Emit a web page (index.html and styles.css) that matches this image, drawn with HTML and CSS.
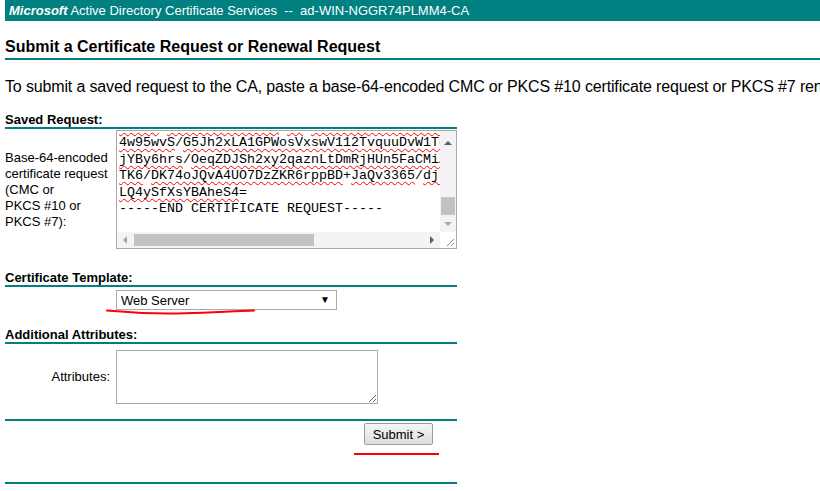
FILE: index.html
```html
<!DOCTYPE html>
<html lang="en">
<head>
    <meta charset="UTF-8">
    <meta name="viewport" content="width=device-width, initial-scale=1.0">
    <title>Microsoft Active Directory Certificate Services</title>
    <link rel="stylesheet" href="styles.css">
</head>
<body>

    <div class="banner"><span class="brand">Microsoft</span> Active Directory Certificate Services &nbsp;--&nbsp; ad-WIN-NGGR74PLMM4-CA</div>

    <h1 class="page-title">Submit a Certificate Request or Renewal Request</h1>

    <p class="intro">To submit a saved request to the CA, paste a base-64-encoded CMC or PKCS #10 certificate request or PKCS #7 renewal request generated by an external source (such as a Web server) in the Saved Request box.</p>

    <form class="req-form">
        <h2 class="section-title first">Saved Request:</h2>
        <div class="field-row saved-row">
            <label class="field-label">Base-64-encoded<br>certificate request<br>(CMC or<br>PKCS #10 or<br>PKCS #7):</label>
            <div class="req-box">
                <div class="req-view">
<pre class="req-text"><span class="sq">NKzrX</span>+<span class="sq">Yt8xHvB3sW9cLm</span>+<span class="sq">Ke</span>+<span class="sq">aZ5cR7uT1wE2oI6kBnHe</span>
<span class="sq">4w95wvS</span>/<span class="sq">G5Jh2xLA1GPWosVxswV112TvquuDvW1TqRbk</span>
<span class="sq">jYBy6hrs</span>/<span class="sq">OeqZDJSh2xy2qaznLtDmRjHUn5FaCMiZ0wd</span>
<span class="sq">TK6</span>/<span class="sq">DK74oJQvA4UO7DzZKR6rppBD</span>+<span class="sq">JaQv3365</span>/<span class="sq">djF9a</span>
<span class="sq">LQ4ySfXsYBAheS4</span>=
-----END CERTIFICATE REQUEST-----
</pre>
                </div>
                <div class="vbar">
                    <span class="arr-box tall"><span class="tri up"></span></span>
                    <span class="vtrack"><span class="vthumb"></span></span>
                    <span class="arr-box"><span class="tri down"></span></span>
                </div>
                <div class="hbar">
                    <span class="arr-box"><span class="tri left"></span></span>
                    <span class="htrack"><span class="hthumb"></span></span>
                    <span class="arr-box"><span class="tri right"></span></span>
                </div>
                <div class="corner">
                    <svg width="16" height="16" viewBox="0 0 16 16">
                        <path d="M14 7 L7 14 M14 11 L11 14" stroke="#8a8a8a" stroke-width="1"/>
                    </svg>
                </div>
            </div>
        </div>

        <h2 class="section-title template-title">Certificate Template:</h2>
        <div class="field-row template-row">
            <span class="field-label"></span>
            <span class="select-wrap">
                <select class="tpl-select">
                    <option>Web Server</option>
                </select>
            </span>
        </div>

        <h2 class="section-title attr-title">Additional Attributes:</h2>
        <div class="field-row attr-row">
            <label class="field-label right">Attributes:</label>
            <textarea class="attr-box"></textarea>
        </div>

        <div class="submit-row">
            <button type="button" class="submit-btn">Submit &gt;</button>
        </div>
        <div class="end-rule"></div>
    </form>

    <!-- red marks drawn over the screenshot -->
    <svg class="marks" width="820" height="491" viewBox="0 0 820 491">
        <path d="M107 310.5 C128 312.5 155 314 185 313.2 S235 311 254 310.6" fill="none" stroke="#ff0000" stroke-width="2" stroke-linecap="round"/>
        <path d="M354 454 L439 454" stroke="#ff0000" stroke-width="2"/>
    </svg>
</body>
</html>
```

FILE: styles.css
```css
html, body {
    overflow: hidden;
}

body {
    margin: 0 0 0 5px;
    font-family: "Liberation Sans", Arial, sans-serif;
    color: #000000;
    background: #ffffff;
}

.banner {
    height: 21px;
    line-height: 21px;
    padding-left: 4px;
    background-color: #008080;
    color: #ffffff;
    font-size: 13px;
    white-space: nowrap;
}

.brand {
    font-weight: bold;
    font-style: italic;
}

.page-title {
    margin: 17px 0 0;
    padding-bottom: 2px;
    font-size: 16px;
    line-height: 18px;
    border-bottom: 2px solid #008080;
}

.intro {
    margin: 18px 0 0;
    font-size: 16px;
    line-height: 18px;
    letter-spacing: -0.15px;
    white-space: nowrap;
}

.req-form {
    width: 452px;
}

.section-title {
    margin: 0;
    font-size: 13px;
    line-height: 14px;
    border-bottom: 2px solid #008080;
}

.section-title.first {
    margin-top: 17px;
}

.template-title {
    margin-top: 22px;
}

.attr-title {
    margin-top: 18px;
}

.field-row {
    display: flex;
    align-items: center;
    gap: 6px;
}

.field-label {
    width: 105px;
    flex: none;
    font-size: 13px;
    line-height: 16px;
}

.field-label.right {
    text-align: right;
}

.saved-row {
    margin-top: 1px;
}

.template-row {
    margin-top: 3px;
}

.attr-row {
    margin-top: 6px;
}

/* saved request box with its scroll bars */
.req-box {
    box-sizing: border-box;
    width: 342px;
    height: 119px;
    border: 1px solid #a9a9a9;
    display: grid;
    grid-template-columns: 1fr 16px;
    grid-template-rows: 1fr 16px;
    background: #ffffff;
}

.req-view {
    overflow: hidden;
}

.req-text {
    margin: -12px 0 0;
    padding-left: 2px;
    font-family: "Liberation Mono", "Courier New", monospace;
    font-size: 13.33px;
    line-height: 16.4px;
    white-space: pre;
}

.sq {
    text-decoration: underline wavy #ff0000;
    text-decoration-thickness: 1px;
    text-underline-offset: 2px;
    text-decoration-skip-ink: none;
}

.vbar {
    display: flex;
    flex-direction: column;
    background: #f4f2f5;
}

.hbar {
    display: flex;
    background: #f4f2f5;
}

.arr-box {
    width: 16px;
    height: 16px;
    flex: none;
    display: flex;
    align-items: center;
    justify-content: center;
}

.arr-box.tall {
    height: 24px;
}

.tri {
    width: 0;
    height: 0;
}

.tri.up {
    border-left: 4px solid transparent;
    border-right: 4px solid transparent;
    border-bottom: 4px solid #606060;
}

.tri.down {
    border-left: 4px solid transparent;
    border-right: 4px solid transparent;
    border-top: 4px solid #a8a8a8;
}

.tri.left {
    border-top: 4px solid transparent;
    border-bottom: 4px solid transparent;
    border-right: 4px solid #a8a8a8;
}

.tri.right {
    border-top: 4px solid transparent;
    border-bottom: 4px solid transparent;
    border-left: 4px solid #606060;
}

.vtrack {
    flex: 1;
}

.vthumb {
    display: block;
    margin: 42px 1px 0;
    height: 18px;
    background: #c2c2c2;
}

.htrack {
    flex: 1;
}

.hthumb {
    display: block;
    margin: 2px 0 0 1px;
    width: 180px;
    height: 12px;
    background: #c2c2c2;
}

.corner {
    background: #ffffff;
}

.corner svg {
    display: block;
}

/* template dropdown */
.select-wrap {
    position: relative;
    display: inline-block;
}

.select-wrap::after {
    content: "\25BC";
    position: absolute;
    right: 7px;
    top: 5px;
    font-size: 10px;
    line-height: 10px;
    color: #000000;
    pointer-events: none;
}

.tpl-select {
    appearance: none;
    -webkit-appearance: none;
    box-sizing: border-box;
    width: 221px;
    height: 20px;
    margin: 0;
    padding: 0 4px;
    border: 1px solid #a9a9a9;
    border-radius: 0;
    background: #ffffff;
    color: #000000;
    font-family: "Liberation Sans", Arial, sans-serif;
    font-size: 13px;
}

.attr-box {
    box-sizing: border-box;
    width: 262px;
    height: 54px;
    margin: 0;
    padding: 2px;
    border: 1px solid #a9a9a9;
    border-radius: 0;
    font-family: "Liberation Mono", monospace;
    font-size: 13px;
}

.submit-row {
    margin-top: 15px;
    padding: 2px 24px 0 0;
    border-top: 2px solid #008080;
    display: flex;
    justify-content: flex-end;
}

.submit-btn {
    box-sizing: border-box;
    width: 69px;
    height: 22px;
    padding: 0;
    border: 1px solid #9c9c9c;
    border-radius: 2px;
    background: linear-gradient(#f6f6f6, #dddddd);
    color: #000000;
    font-family: "Liberation Sans", Arial, sans-serif;
    font-size: 13px;
}

.end-rule {
    margin-top: 37px;
    border-top: 2px solid #008080;
}

.marks {
    position: absolute;
    top: 0;
    left: 0;
    pointer-events: none;
}
```
